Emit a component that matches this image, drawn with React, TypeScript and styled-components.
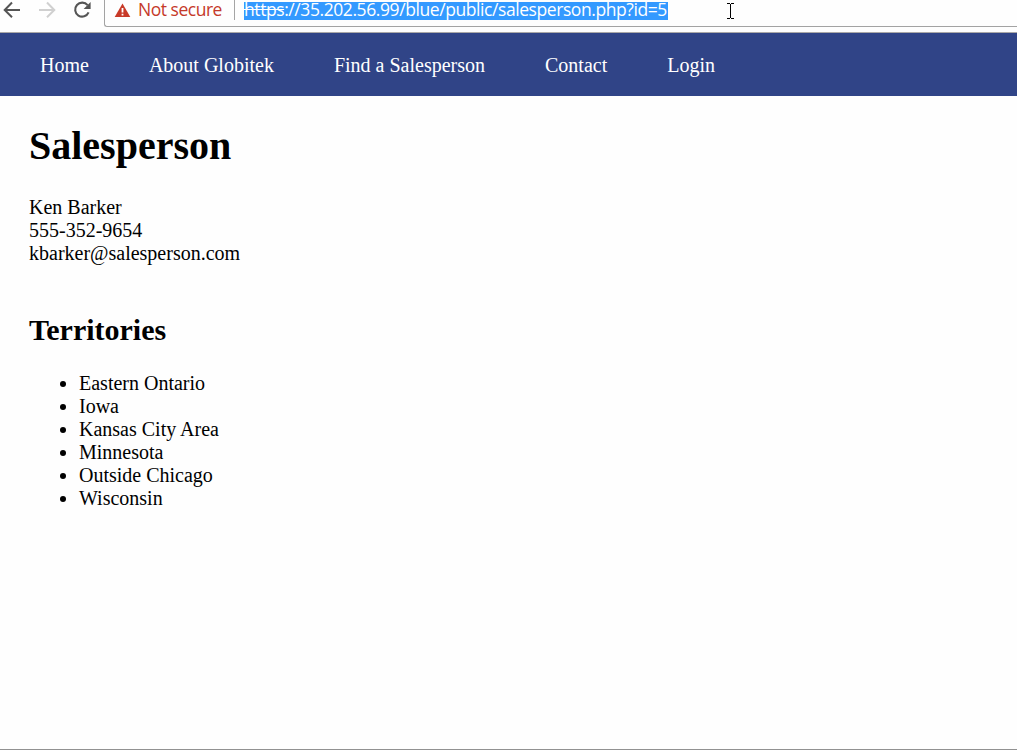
import React from "react";
import styled, { createGlobalStyle } from "styled-components";

const GlobalStyle = createGlobalStyle`
  html, body { margin: 0; padding: 0; background: #fefefe; }
  body { overflow: hidden; }
`;

const Window = styled.div`
  box-sizing: border-box;
  width: 100%;
  height: 750px;
  display: flex;
  flex-direction: column;
  background: #fefefe;
  border-bottom: 1px solid #919191;
  color: #000;
  font: 20px/23px "Liberation Serif", "Times New Roman", serif;
`;

const Toolbar = styled.div`
  position: relative;
  box-sizing: border-box;
  height: 33px;
  flex: none;
  display: flex;
  align-items: flex-start;
  border-bottom: 1px solid #aaa8a8;
`;

const ToolbarIcons = styled.svg`
  display: block;
  flex: none;
  width: 104px;
  height: 27px;
`;

const AddressBar = styled.div`
  box-sizing: border-box;
  flex: 1;
  height: 27px;
  display: flex;
  border: solid #a3a3a3;
  border-width: 0 0 1px 1px;
  border-bottom-left-radius: 3px;
  padding-left: 9px;
  font-family: "Open Sans", "Noto Sans", sans-serif;
  font-size: 17.5px;
  line-height: 20px;
  white-space: nowrap;
`;

const WarningIcon = styled.svg`
  flex: none;
  width: 17px;
  height: 20px;
`;

const SecurityLabel = styled.span`
  width: 96px;
  margin-left: 7px;
  color: #c53929;
  line-height: 19px;
  letter-spacing: -0.48px;
`;

const Divider = styled.span`
  width: 1px;
  height: 20px;
  margin-right: 9px;
  background: #a5a5a5;
`;

const Url = styled.span`
  box-sizing: border-box;
  width: 424px;
  height: 18px;
  margin-top: 2px;
  line-height: 15px;
  background: #3399ff;
  color: #fff;
  letter-spacing: -0.42px;
`;

const Scheme = styled.span`
  text-decoration: line-through;
  text-decoration-thickness: 1px;
`;

const TextCursor = styled.svg`
  position: absolute;
  left: 726px;
  top: 3px;
  width: 9px;
  height: 17px;
`;

const Nav = styled.nav`
  box-sizing: border-box;
  height: 63px;
  flex: none;
  display: flex;
  gap: 60px;
  padding: 21px 40px 0;
  background: #304487;
`;

const NavLink = styled.a`
  color: #fff;
  text-decoration: none;
  white-space: nowrap;
`;

const Content = styled.main`
  padding: 0 29px;
`;

const Title = styled.h1`
  margin: 27px 0 27px;
  font-size: 40px;
  line-height: 46px;
`;

const Details = styled.div`
  margin-bottom: 48px;
`;

const Subtitle = styled.h2`
  margin: 0 0 25px;
  font-size: 30px;
  line-height: 34px;
`;

const List = styled.ul`
  margin: 0;
  padding-left: 50px;
`;

const links = ["Home", "About Globitek", "Find a Salesperson", "Contact", "Login"];
const details = ["Ken Barker", "555-352-9654", "kbarker@salesperson.com"];
const territories = [
  "Eastern Ontario",
  "Iowa",
  "Kansas City Area",
  "Minnesota",
  "Outside Chicago",
  "Wisconsin",
];

export default function App() {
  return (
    <Window>
      <GlobalStyle />
      <Toolbar>
        <ToolbarIcons viewBox="0 0 104 27" fill="none" strokeWidth="2">
          <path d="M20 10H5M12 2.5 4.7 10 12 17.2" stroke="#555" />
          <path d="M39 10h15M47 2.5l7.3 7.5-7.3 7.2" stroke="#d0d0d0" />
          <path d="M87.6 5.2A7 7 0 1 0 88.6 12.4" stroke="#555" strokeWidth="2.1" />
          <path d="M90.6 2V9h-7z" fill="#555" />
        </ToolbarIcons>
        <AddressBar>
          <WarningIcon viewBox="0 0 17 20">
            <path d="M8.5 3.5 16.3 17H.7z" fill="#c83a28" />
            <path d="M7.6 8h1.8v4.6H7.6zM7.6 13.8h1.8v1.7H7.6z" fill="#fff" />
          </WarningIcon>
          <SecurityLabel>Not secure</SecurityLabel>
          <Divider />
          <Url>
            <Scheme>https</Scheme>://35.202.56.99/blue/public/salesperson.php?id=5
          </Url>
        </AddressBar>
        <TextCursor viewBox="0 0 9 17" fill="none" stroke="#000" shapeRendering="crispEdges">
          <path d="M1 .5h3M5 .5h3M4.5 1v14M1 15.5h3M5 15.5h3" />
        </TextCursor>
      </Toolbar>
      <Nav>
        {links.map((label) => (
          <NavLink key={label}>{label}</NavLink>
        ))}
      </Nav>
      <Content>
        <Title>Salesperson</Title>
        <Details>
          {details.map((line) => (
            <div key={line}>{line}</div>
          ))}
        </Details>
        <Subtitle>Territories</Subtitle>
        <List>
          {territories.map((name) => (
            <li key={name}>{name}</li>
          ))}
        </List>
      </Content>
    </Window>
  );
}
